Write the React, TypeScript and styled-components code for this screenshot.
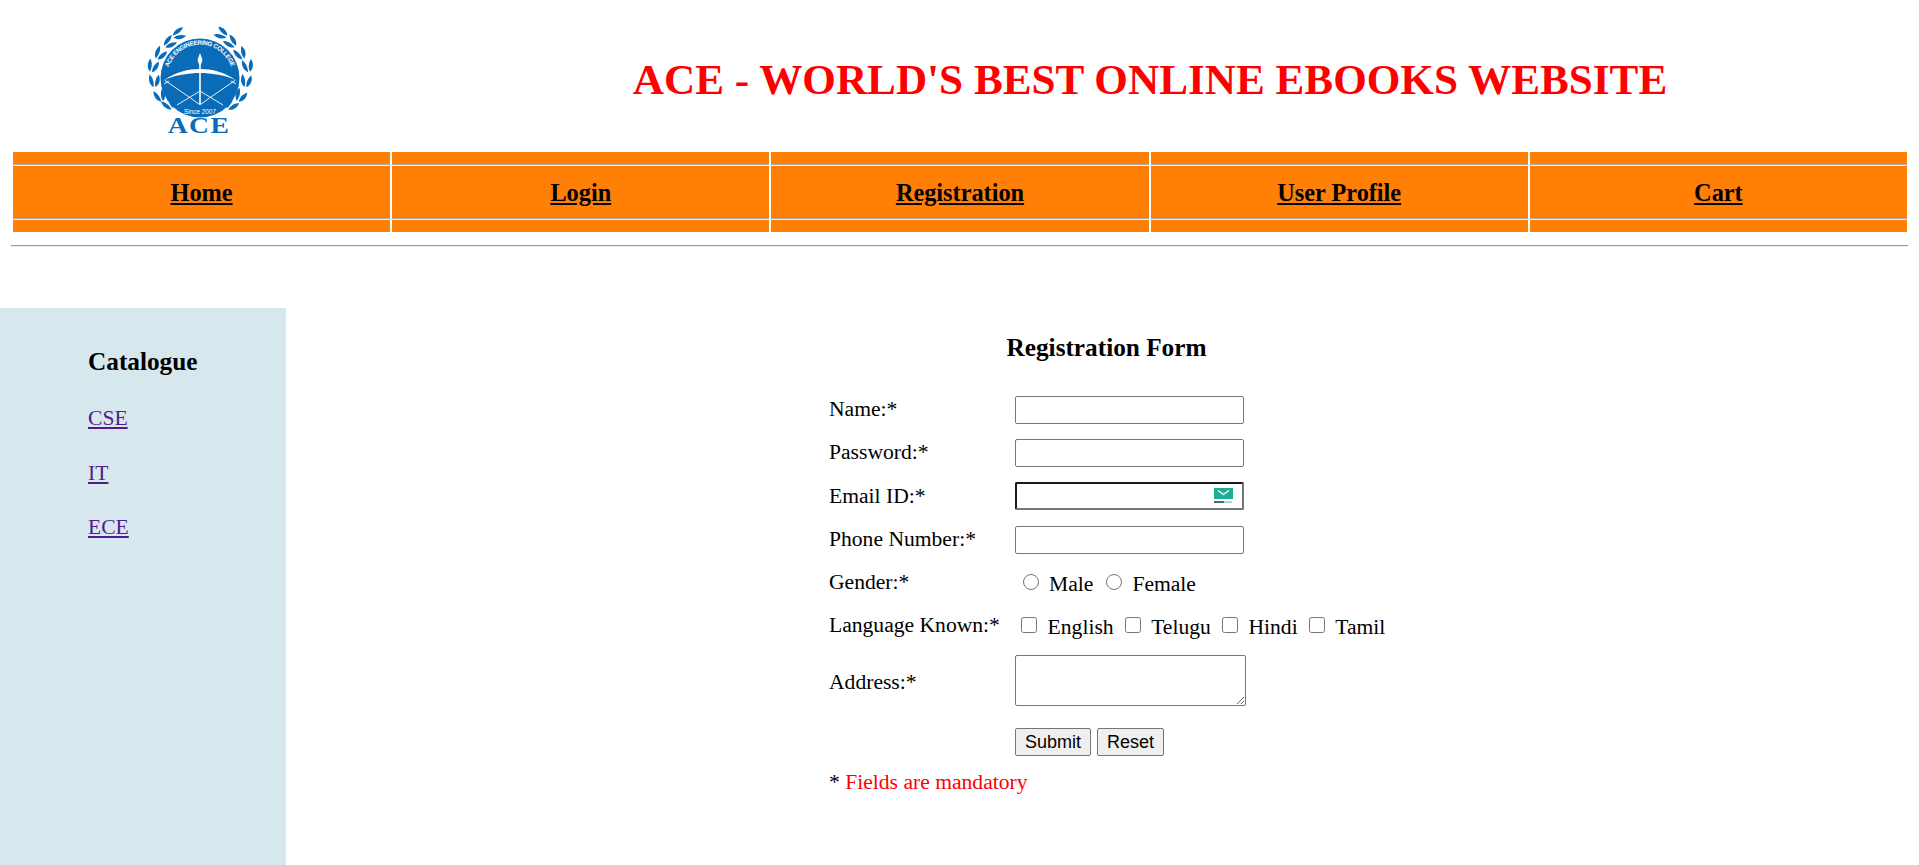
import React from "react";
import styled, { createGlobalStyle } from "styled-components";

const Global = createGlobalStyle`
  html, body { margin: 0; padding: 0; background: #fff; }
  body { font-family: "Liberation Serif", "Times New Roman", serif; font-size: 21.6px; color: #000; overflow: hidden; }
`;
const Page = styled.div`height: 865px; overflow: hidden;`;
const Header = styled.header`display: flex; align-items: center; height: 152px; padding: 0 12px;`;
const LogoCell = styled.div`width: 376px; display: flex; justify-content: center;`;
const LogoSvg = styled.svg`overflow: visible;`;
const Title = styled.h1`
  flex: 1; margin: 0; padding: 6px 0 0 5px; text-align: center; color: #f00; font-size: 43.2px; font-weight: bold;
`;
const NavTable = styled.div`
  display: grid; grid-template-columns: repeat(5, 1fr); gap: 2px; margin: 0 12px 0 13px; height: 80px;
`;
const NavCell = styled.div`
  background: #ff7f07; display: flex; flex-direction: column; padding: 12px 0;
`;
const NavRule = styled.hr`
  flex: none; width: 100%; margin: 0; box-sizing: border-box; border: 0; height: 2px;
  border-top: 1px solid #a8abb0; border-bottom: 1px solid #eeeeee;
`;
const NavBody = styled.div`flex: 1; display: flex; align-items: center; justify-content: center; padding-top: 1px;`;
const NavLink = styled.a`color: #000; font-weight: bold; font-size: 24.3px; text-decoration: underline;`;
const PageRule = styled.hr`
  margin: 13px 11px 0 11px; border: 0; height: 2px; box-sizing: border-box;
  border-top: 1px solid #9a9a9a; border-bottom: 1px solid #eeeeee;
`;
const Content = styled.div`display: flex; margin-top: 61px; height: 560px;`;
const Sidebar = styled.aside`width: 286px; flex: none; background: #d6e8ee; padding: 39px 0 0 88px; box-sizing: border-box;`;
const SideTitle = styled.h3`font-size: 25.27px; margin: 0 0 30px; line-height: 29px;`;
const SideLink = styled.a`display: block; color: #551a8b; text-decoration: underline; font-size: 21.6px; line-height: 25px; margin-bottom: 29.6px;`;
const Main = styled.main`flex: 1; display: flex; flex-direction: column; align-items: flex-start; padding: 25px 0 0 543px;`;
const FormTitle = styled.h3`width: 555px; text-align: center; font-size: 25.27px; margin: 0 0 27px; line-height: 28px;`;
const Row = styled.div<{ $h?: number }>`display: flex; align-items: center; height: ${p => p.$h ?? 43.3}px;`;
const ButtonRow = styled(Row)`margin-top: 4px; height: 44px;`;
const Label = styled.label`width: 186px; flex: none;`;
const AddressLabel = styled(Label)`padding-top: 2px;`;
const TextInput = styled.input`
  width: 229px; height: 28px; box-sizing: border-box; border: 1px solid #767676; border-radius: 2px; padding: 1px 2px; background: #fff;
`;
const FocusWrap = styled.div`position: relative; display: flex;`;
const FocusInput = styled(TextInput)`border: 2px solid #767676; border-top-color: #1c1c1c; border-left-color: #1c1c1c;`;
const MailBadge = styled.svg`position: absolute; right: 11px; top: 6px;`;
const Choice = styled.span`display: inline-flex; align-items: center; margin-right: 5px; padding-top: 3px;`;
const Radio = styled.input`margin: 0 10px 5px 8px; width: 16px; height: 16px;`;
const Check = styled.input`margin: 0 10.6px 5px 6px; width: 16px; height: 16px;`;
const Area = styled.textarea`width: 231px; height: 51px; box-sizing: border-box; border: 1px solid #767676; border-radius: 2px; margin: 0 0 3px;`;
const Btn = styled.button`
  font-family: "Liberation Sans", Arial, sans-serif; font-size: 18px; height: 28px; padding: 0 9px; margin-right: 6px;
  background: #efefef; border: 1px solid #767676; border-radius: 2px; color: #000;
`;
const Note = styled.div`margin-top: 6px;`;
const Red = styled.span`color: #f00;`;

const BLUE = "#0a6cb8";
const CX = 53;
const CY = 61;

const LeafPair = ({ a, r, s }: { a: number; r: number; s: number }) => {
  const rad = (a * Math.PI) / 180;
  const x = CX + s * r * Math.sin(rad);
  const y = CY - r * Math.cos(rad);
  return (
    <g transform={`translate(${x} ${y}) rotate(${s * (a - 90)})`} fill={BLUE}>
      <path d="M-1 6C-5 3 -6 -2 -4 -7C-1 -4 0 1 -1 6Z" />
      <path d="M1 6C5 4 7 -1 5 -6C2 -3 0 1 1 6Z" />
    </g>
  );
};

const leaves: [number, number][] = [[26, 49], [41, 47], [59, 47], [76, 49], [94, 46], [114, 44], [130, 41]];

const Logo = () => (
  <LogoSvg width="106" height="118" viewBox="0 0 106 118">
    {leaves.map(([a, r]) => <LeafPair key={a} a={a} r={r} s={1} />)}
    {leaves.map(([a, r]) => <LeafPair key={-a} a={a} r={r} s={-1} />)}
    <circle cx={CX} cy={CY} r="39.5" fill={BLUE} />
    <defs><path id="arcTop" d="M20.1 58.1A33 33 0 0 1 85.9 58.1" /></defs>
    <text fontFamily="Liberation Sans" fontSize="6.2" fontWeight="bold" fill="#fff"><textPath href="#arcTop" startOffset="8" textLength="82">ACE ENGINEERING COLLEGE</textPath></text>
    <path d="M53 36L55.5 43L53.8 48L53.8 88H52.2L52.2 48L50.5 43Z" fill="#fff" />
    <path d="M17.5 63C28 55 42 52 53 52C64 52 78 55 88.5 63C78 58 64 56 53 56C42 56 28 58 17.5 63Z" fill="#fff" />
    <path d="M17.5 63L52 87M88.5 63L54 87M30 88L53 74L76 88M17 67L22 64M89 67L84 64" fill="none" stroke="#fff" strokeWidth=".9" />
    <text x={CX} y="97" textAnchor="middle" fontFamily="Liberation Sans" fontSize="6.4" fill="#fff">Since 2007</text>
    <text transform={`translate(${CX - 1} 116) scale(1.2 1)`} textAnchor="middle" fontFamily="Liberation Serif" fontWeight="bold" fontSize="23" letterSpacing="1.2" fill={BLUE}>ACE</text>
  </LogoSvg>
);

const navItems = ["Home", "Login", "Registration", "User Profile", "Cart"];
const langs = ["English", "Telugu", "Hindi", "Tamil"];

export default function App() {
  return (
    <Page>
      <Global />
      <Header>
        <LogoCell><Logo /></LogoCell>
        <Title>ACE - WORLD'S BEST ONLINE EBOOKS WEBSITE</Title>
      </Header>
      <NavTable>
        {navItems.map(n => (
          <NavCell key={n}>
            <NavRule />
            <NavBody><NavLink href="#">{n}</NavLink></NavBody>
            <NavRule />
          </NavCell>
        ))}
      </NavTable>
      <PageRule />
      <Content>
        <Sidebar>
          <SideTitle>Catalogue</SideTitle>
          {["CSE", "IT", "ECE"].map(c => <SideLink key={c} href="#">{c}</SideLink>)}
        </Sidebar>
        <Main>
          <FormTitle>Registration Form</FormTitle>
          <Row><Label>Name:*</Label><TextInput /></Row>
          <Row><Label>Password:*</Label><TextInput type="password" /></Row>
          <Row>
            <Label>Email ID:*</Label>
            <FocusWrap>
              <FocusInput />
              <MailBadge width="19" height="16" viewBox="0 0 19 16">
                <rect x="0" y="0" width="19" height="11" fill="#1fae95" />
                <path d="M4 2.5L9.5 6.5L15 2.5" fill="none" stroke="#fff" strokeWidth="1.4" />
                <rect x="0" y="13" width="10" height="2" fill="#4a6a70" />
                <rect x="10" y="13" width="8" height="2" fill="#a5dcd2" />
              </MailBadge>
            </FocusWrap>
          </Row>
          <Row><Label>Phone Number:*</Label><TextInput /></Row>
          <Row $h={43}>
            <Label>Gender:*</Label>
            <Choice><Radio type="radio" name="g" />Male</Choice>
            <Choice><Radio type="radio" name="g" />Female</Choice>
          </Row>
          <Row $h={43}>
            <Label>Language Known:*</Label>
            {langs.map(l => <Choice key={l}><Check type="checkbox" />{l}</Choice>)}
          </Row>
          <Row $h={69}><AddressLabel>Address:*</AddressLabel><Area /></Row>
          <ButtonRow><Label /><Btn>Submit</Btn><Btn>Reset</Btn></ButtonRow>
          <Note>* <Red>Fields are mandatory</Red></Note>
        </Main>
      </Content>
    </Page>
  );
}
